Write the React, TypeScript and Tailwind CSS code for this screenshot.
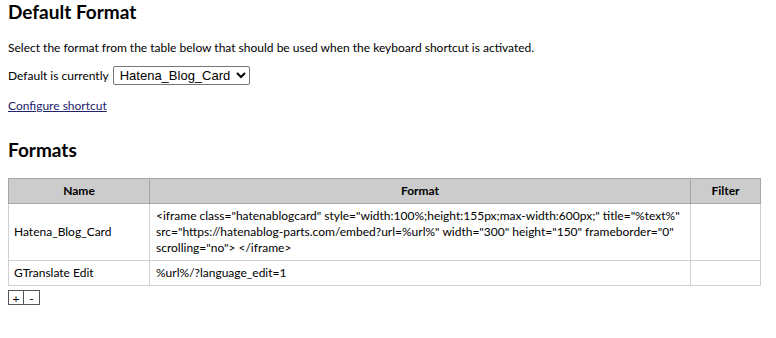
import { useState } from 'react';

const rows = [
  {
    name: 'Hatena_Blog_Card',
    format:
      '<iframe class="hatenablogcard" style="width:100%;height:155px;max-width:600px;" title="%text%" src="https://hatenablog-parts.com/embed?url=%url%" width="300" height="150" frameborder="0" scrolling="no"> </iframe>',
    filter: '',
  },
  { name: 'GTranslate Edit', format: '%url%/?language_edit=1', filter: '' },
];

export default function App() {
  const [current, setCurrent] = useState('Hatena_Blog_Card');

  return (
    <div className="w-[776px] h-[338px] bg-white text-black px-2 text-[12px] leading-[16px] font-['Lato','Noto_Sans',sans-serif]">
      <h2 className="text-[19px] leading-[24px] font-bold">Default Format</h2>
      <p className="mt-[16px]">
        Select the format from the table below that should be used when the keyboard shortcut is activated.
      </p>
      <div className="mt-[10px] flex items-center gap-1">
        <span>Default is currently</span>
        <select
          value={current}
          onChange={(e) => setCurrent(e.target.value)}
          className="h-[19px] border border-[#767676] rounded-[2px] px-[2px] text-[13px] font-['Liberation_Sans',Arial,sans-serif] bg-white"
        >
          {rows.map((r) => (
            <option key={r.name}>{r.name}</option>
          ))}
        </select>
      </div>
      <a href="#" className="mt-[13px] inline-block underline text-[#22226e]">
        Configure shortcut
      </a>
      <h2 className="mt-[24px] text-[19px] leading-[24px] font-bold">Formats</h2>

      <table className="mt-[16px] w-[753px] border-collapse border border-[#a6a6a6]">
        <thead>
          <tr className="bg-[#cccccc] h-[25px]">
            <th className="w-[141px] border border-[#a6a6a6] font-bold">Name</th>
            <th className="w-[541px] border border-[#a6a6a6] font-bold">Format</th>
            <th className="border border-[#a6a6a6] font-bold">Filter</th>
          </tr>
        </thead>
        <tbody>
          {rows.map((r) => (
            <tr key={r.name}>
              <td className="border border-[#cfcfcf] px-[5px] py-[4px] align-middle">{r.name}</td>
              <td className="border border-[#cfcfcf] px-[6px] py-[4px] align-middle">{r.format}</td>
              <td className="border border-[#cfcfcf] px-[5px] py-[4px]">{r.filter}</td>
            </tr>
          ))}
        </tbody>
      </table>

      <div className="mt-[4px] flex">
        <button className="w-[16px] h-[15px] border border-[#555] flex items-end justify-center overflow-hidden leading-[11px] text-[12px]">
          +
        </button>
        <button className="w-[16px] h-[15px] border border-l-0 border-[#555] flex items-end justify-center overflow-hidden leading-[11px] text-[12px]">
          -
        </button>
      </div>
    </div>
  );
}
